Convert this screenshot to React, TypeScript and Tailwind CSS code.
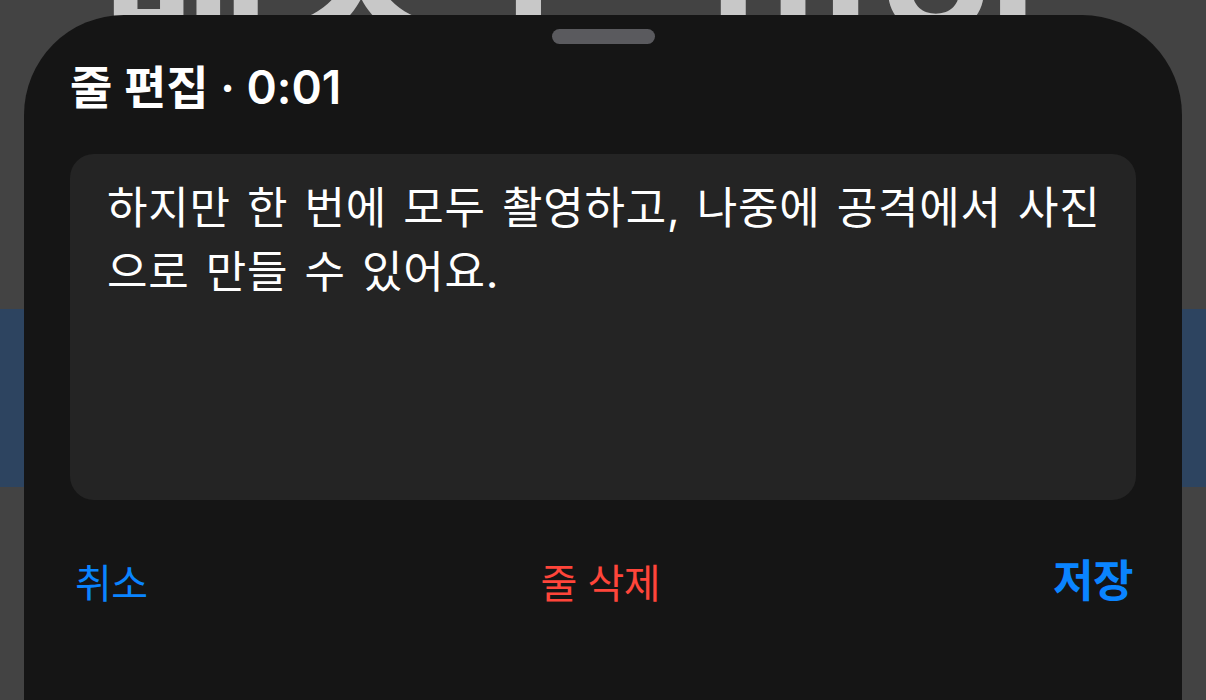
import React from "react";

const FONT = "font-['Inter','Noto_Sans_CJK_KR',sans-serif]";

export default function App() {
  return (
    <div className={`relative h-[700px] w-[1206px] overflow-hidden bg-[#434343] ${FONT}`}>
      {/* background page */}
      <div className="flex flex-col">
        <div className="-mt-[70px] flex h-[200px] items-start gap-[40px] pl-[100px] text-[190px] font-bold leading-[200px] text-[#c8c8c8] whitespace-nowrap">
          <span>맵스</span>
          <span>드</span>
          <span>미앙</span>
        </div>
        <div className="mt-[179px] h-[178px] bg-[#2d4460]" />
      </div>

      {/* bottom sheet */}
      <div className="absolute bottom-0 left-[24px] right-[24px] top-[15px] flex flex-col rounded-t-[100px] bg-[#151515] px-[46px]">
        <div className="flex justify-center pt-[14px]">
          <div className="h-[15px] w-[103px] rounded-full bg-[#5a5a5e]" />
        </div>
        <div className="mt-[17px] text-[46px] font-semibold leading-[52px] tracking-[0px] text-white">
          줄 편집 · 0:01
        </div>
        <div className="mt-[41px] h-[346px] rounded-[24px] bg-[#242424] pl-[37px] pr-[30px] pt-[22px]">
          <p className="text-[44px] leading-[64px] tracking-[0.8px] [word-spacing:3px] text-white">
            하지만 한 번에 모두 촬영하고, 나중에 공격에서 사진으로 만들 수 있어요.
          </p>
        </div>
        <div className="mt-[60px] flex items-start justify-between pl-[5px] pr-[3px] text-[40px] leading-[48px] tracking-[-0.5px]">
          <span className="text-[#0a84ff]">취소</span>
          <span className="text-[#ff453a]">줄 삭제</span>
          <span className="-mt-[3px] text-[44px] font-semibold text-[#0a84ff]">저장</span>
        </div>
      </div>
    </div>
  );
}
